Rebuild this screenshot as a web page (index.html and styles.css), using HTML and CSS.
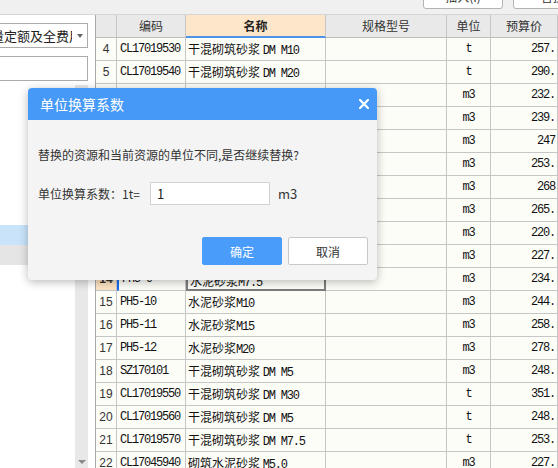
FILE: index.html
```html
<!DOCTYPE html>
<html lang="zh-CN">
<head>
<meta charset="utf-8">
<title>单位换算系数</title>
<link rel="stylesheet" href="styles.css">
</head>
<body>
<div class="top">
  <button class="tbtn">插入(I)</button>
  <button class="tbtn">替换</button>
</div>
<div class="main">
  <aside class="left">
    <div class="select"><span class="stext">量定额及全费用</span><i class="caret"></i></div>
    <div class="search"></div>
    <div class="tree">
      <div class="items">
        <div class="item sel"></div>
        <div class="item hov"></div>
      </div>
      <div class="vscroll"><i class="up"></i><i class="down"></i></div>
    </div>
  </aside>
  <div class="split"></div>
  <section class="grid">
    <div class="row head">
      <div class="c-no"></div><div>编码</div><div class="hsel">名称</div><div>规格型号</div><div>单位</div><div>预算价</div>
    </div>
    <div class="row"><div class="c-no">4</div><div class="c-code">CL17019530</div><div class="c-name">干混砌筑砂浆 <span class="lat">DM M10</span></div><div></div><div class="c-unit">t</div><div class="c-price">257.</div></div>
    <div class="row"><div class="c-no">5</div><div class="c-code">CL17019540</div><div class="c-name">干混砌筑砂浆 <span class="lat">DM M20</span></div><div></div><div class="c-unit">t</div><div class="c-price">290.</div></div>
    <div class="row"><div class="c-no">6</div><div class="c-code">PH5-1</div><div class="c-name">水泥砂浆<span class="lat">M2.5</span></div><div></div><div class="c-unit">m3</div><div class="c-price">232.</div></div>
    <div class="row"><div class="c-no">7</div><div class="c-code">PH5-2</div><div class="c-name">水泥砂浆<span class="lat">M5</span></div><div></div><div class="c-unit">m3</div><div class="c-price">239.</div></div>
    <div class="row"><div class="c-no">8</div><div class="c-code">PH5-3</div><div class="c-name">水泥砂浆<span class="lat">M7.5</span></div><div></div><div class="c-unit">m3</div><div class="c-price">247</div></div>
    <div class="row"><div class="c-no">9</div><div class="c-code">PH5-4</div><div class="c-name">水泥砂浆<span class="lat">M10</span></div><div></div><div class="c-unit">m3</div><div class="c-price">253.</div></div>
    <div class="row"><div class="c-no">10</div><div class="c-code">PH5-5</div><div class="c-name">水泥砂浆<span class="lat">M15</span></div><div></div><div class="c-unit">m3</div><div class="c-price">268</div></div>
    <div class="row"><div class="c-no">11</div><div class="c-code">PH5-6</div><div class="c-name">水泥砂浆<span class="lat">M20</span></div><div></div><div class="c-unit">m3</div><div class="c-price">265.</div></div>
    <div class="row"><div class="c-no">12</div><div class="c-code">PH5-7</div><div class="c-name">水泥砂浆<span class="lat">M2.5</span></div><div></div><div class="c-unit">m3</div><div class="c-price">220.</div></div>
    <div class="row"><div class="c-no">13</div><div class="c-code">PH5-8</div><div class="c-name">水泥砂浆<span class="lat">M5</span></div><div></div><div class="c-unit">m3</div><div class="c-price">227.</div></div>
    <div class="row cur"><div class="c-no">14</div><div class="c-code">PH5-9</div><div class="c-name">水泥砂浆<span class="lat">M7.5</span></div><div></div><div class="c-unit">m3</div><div class="c-price">234.</div></div>
    <div class="row"><div class="c-no">15</div><div class="c-code">PH5-10</div><div class="c-name">水泥砂浆<span class="lat">M10</span></div><div></div><div class="c-unit">m3</div><div class="c-price">244.</div></div>
    <div class="row"><div class="c-no">16</div><div class="c-code">PH5-11</div><div class="c-name">水泥砂浆<span class="lat">M15</span></div><div></div><div class="c-unit">m3</div><div class="c-price">258.</div></div>
    <div class="row"><div class="c-no">17</div><div class="c-code">PH5-12</div><div class="c-name">水泥砂浆<span class="lat">M20</span></div><div></div><div class="c-unit">m3</div><div class="c-price">278.</div></div>
    <div class="row"><div class="c-no">18</div><div class="c-code">SZ170101</div><div class="c-name">干混砌筑砂浆 <span class="lat">DM M5</span></div><div></div><div class="c-unit">m3</div><div class="c-price">248.</div></div>
    <div class="row"><div class="c-no">19</div><div class="c-code">CL17019550</div><div class="c-name">干混砌筑砂浆 <span class="lat">DM M30</span></div><div></div><div class="c-unit">t</div><div class="c-price">351.</div></div>
    <div class="row"><div class="c-no">20</div><div class="c-code">CL17019560</div><div class="c-name">干混砌筑砂浆 <span class="lat">DM M5</span></div><div></div><div class="c-unit">t</div><div class="c-price">248.</div></div>
    <div class="row"><div class="c-no">21</div><div class="c-code">CL17019570</div><div class="c-name">干混砌筑砂浆 <span class="lat">DM M7.5</span></div><div></div><div class="c-unit">t</div><div class="c-price">253.</div></div>
    <div class="row"><div class="c-no">22</div><div class="c-code">CL17045940</div><div class="c-name">砌筑水泥砂浆 <span class="lat">M5.0</span></div><div></div><div class="c-unit">m3</div><div class="c-price">227.</div></div>
  </section>
</div>

<div class="dialog">
  <div class="d-title">
    <span>单位换算系数</span>
    <svg class="d-close" width="10" height="10" viewBox="0 0 10 10"><path d="M1 1L9 9M9 1L1 9" stroke="#fff" stroke-width="2.2" stroke-linecap="square"/></svg>
  </div>
  <div class="d-body">
    <p class="d-msg">替换的资源和当前资源的单位不同,是否继续替换?</p>
    <div class="d-field">
      <span class="d-label">单位换算系数：1t=</span>
      <span class="d-input">1</span>
      <span class="d-unit">m3</span>
    </div>
    <div class="d-actions">
      <button class="btn primary">确定</button>
      <button class="btn">取消</button>
    </div>
  </div>
</div>
</body>
</html>
```

FILE: styles.css
```css
html, body {
  margin: 0;
  padding: 0;
}
body {
  width: 558px;
  height: 468px;
  overflow: hidden;
  background: #fff;
  position: relative;
  font-family: "Noto Sans CJK SC", sans-serif;
  color: #222;
}

/* top toolbar strip */
.top {
  height: 14px;
  background: #f0f0f0;
  border-bottom: 1px solid #d6d6d6;
  display: flex;
  gap: 10px;
  padding-left: 423px;
}
.tbtn {
  flex: none;
  width: 80px;
  height: 26px;
  margin-top: -17px;
  border: 1px solid #b3b3b3;
  border-radius: 3px;
  background: #fff;
  font: 12px "Noto Sans CJK SC", sans-serif;
  color: #333;
  padding: 0;
}

.main {
  display: flex;
  height: 453px;
}

/* left panel */
.left {
  width: 88px;
  flex: none;
  display: flex;
  flex-direction: column;
  overflow: hidden;
}
.select, .search {
  margin-left: -2px;
  width: 90px;
  height: 25px;
  box-sizing: border-box;
  border: 1px solid #ababab;
  background: #fff;
}
.select {
  margin-top: 8px;
  display: flex;
  align-items: center;
}
.stext {
  width: 73px;
  overflow: hidden;
  white-space: nowrap;
  text-indent: -8px;
  font-size: 13px;
  line-height: 23px;
  color: #222;
}
.caret {
  margin-left: 5px;
  width: 0;
  height: 0;
  border-left: 3.5px solid transparent;
  border-right: 3.5px solid transparent;
  border-top: 4px solid #666;
}
.search {
  margin-top: 8px;
}
.tree {
  margin-top: 4px;
  flex: 1;
  display: flex;
}
.items {
  width: 75px;
  padding-top: 140px;
}
.item {
  height: 20px;
}
.item.sel { background: #c9e4fa; }
.item.hov { background: #e5e5e5; }
.vscroll {
  width: 13px;
  background: #e8e8e8;
  display: flex;
  flex-direction: column;
  justify-content: space-between;
  align-items: center;
  padding: 4px 0;
  box-sizing: border-box;
}
.up {
  width: 0; height: 0;
  border-left: 3px solid transparent;
  border-right: 3px solid transparent;
  border-bottom: 3px solid #606060;
}
.down {
  width: 0; height: 0;
  border-left: 4px solid transparent;
  border-right: 4px solid transparent;
  border-top: 4px solid #8a8a8a;
}

.split {
  width: 7px;
  flex: none;
  background: #fff;
}

/* grid */
.grid {
  flex: 1;
  border-left: 1px solid #a8a8a8;
  overflow: hidden;
}
.row {
  display: grid;
  grid-template-columns: 21px 69px 140px 121px 44px 1fr;
  height: 23px;
}
.row > div {
  box-sizing: border-box;
  border-right: 1px solid #c6c6c6;
  border-bottom: 1px solid #c6c6c6;
  background: #fdfdf8;
  font-size: 12px;
  line-height: 22px;
  white-space: nowrap;
  overflow: hidden;
  color: #111;
}
.row.head > div {
  background: #e9e9e9;
  text-align: center;
  color: #333;
  border-bottom-color: #bdbdbd;
}
.row.head > .hsel {
  background: #fde6c9;
  font-weight: bold;
  color: #222;
  border-bottom: 2px solid #4d94e6;
}
.c-no {
  text-align: center;
  font-family: "Liberation Sans", sans-serif;
  color: #333 !important;
}
.c-code, .c-unit, .c-price, .lat {
  font-family: "Liberation Mono", monospace;
  letter-spacing: -1.2px;
}
.c-code { padding-left: 3px; }
.c-name { padding-left: 2px; }
.c-unit { text-align: center; }
.c-price { text-align: right; padding-right: 2px; }

.row.cur > .c-no {
  background: #fde3c4;
  font-weight: bold;
}
.row.cur > .c-code {
  border-left: 2px solid #1a6cf0;
}
.row.cur > .c-name {
  border: 2px solid #7c7c7c;
}

/* dialog */
.dialog {
  position: absolute;
  left: 28px;
  top: 88px;
  width: 349px;
  border-radius: 4px;
  overflow: hidden;
  background: #f4f4f4;
  box-shadow: 0 2px 10px rgba(0, 0, 0, 0.28);
}
.d-title {
  height: 32px;
  background: #4699f7;
  display: flex;
  align-items: center;
  justify-content: space-between;
  padding: 0 8px 0 12px;
  color: #fff;
  font-size: 14px;
}
.d-body {
  padding: 25px 9px 15px 10px;
  font-size: 12px;
  color: #333;
}
.d-msg {
  margin: 0;
  line-height: 20px;
}
.d-field {
  margin-top: 17px;
  display: flex;
  align-items: center;
  height: 23px;
}
.d-label {
  width: 112px;
  flex: none;
}
.d-input {
  width: 120px;
  height: 23px;
  box-sizing: border-box;
  border: 1px solid #d2d2d2;
  background: #fff;
  padding-left: 6px;
  line-height: 21px;
  font-size: 13px;
  color: #222;
}
.d-unit {
  margin-left: 8px;
  font-size: 13px;
}
.d-actions {
  margin-top: 32px;
  display: flex;
  justify-content: flex-end;
  gap: 6px;
}
.btn {
  width: 80px;
  height: 28px;
  box-sizing: border-box;
  border: 1px solid #c8c8c8;
  border-radius: 2px;
  background: #fff;
  color: #333;
  font: 12px "Noto Sans CJK SC", sans-serif;
  padding: 0;
}
.btn.primary {
  background: #4a9cfa;
  border-color: #4a9cfa;
  color: #fff;
}
```
